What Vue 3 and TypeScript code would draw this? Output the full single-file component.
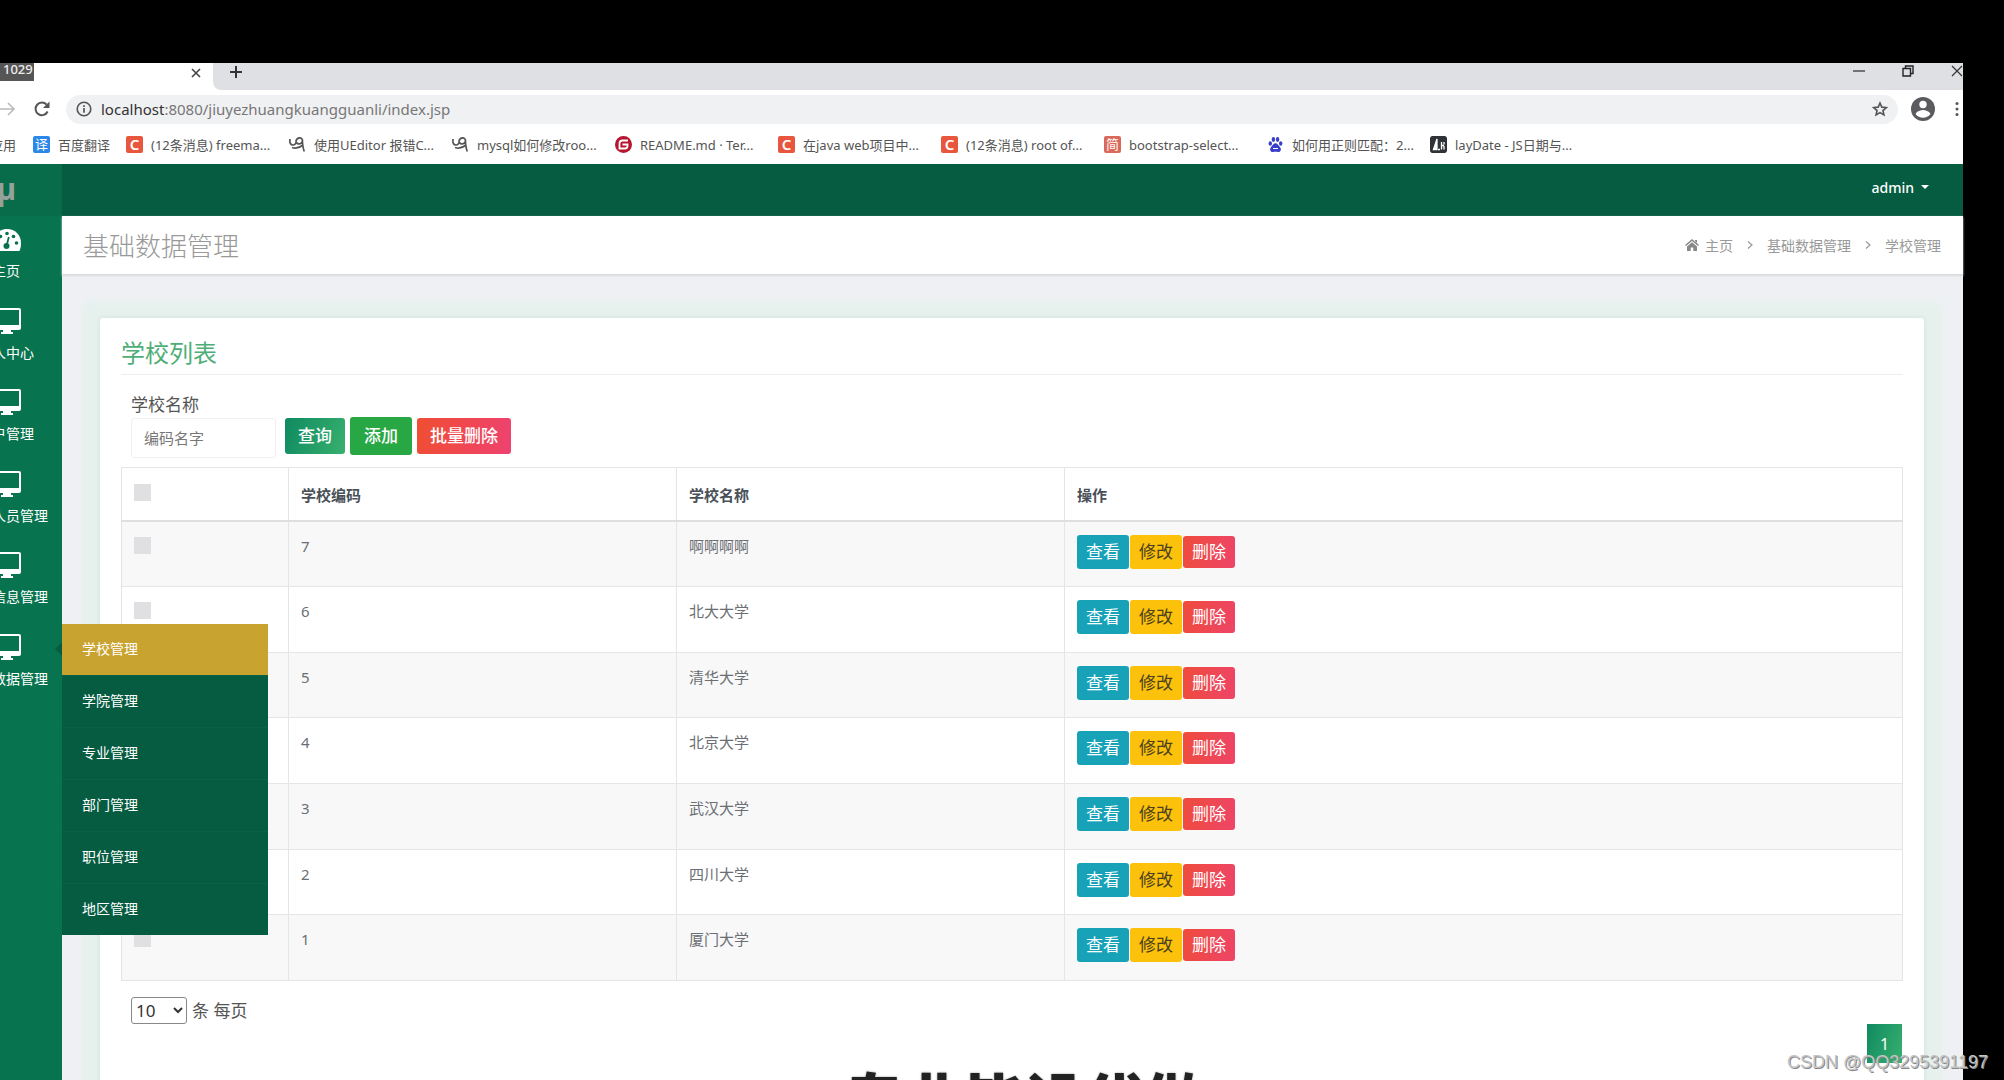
<script setup lang="ts">
import { ref } from 'vue'

interface Bookmark { icon: string; glyph?: string; title: string }
interface NavItem { label: string; size: string; icon: string; open?: boolean }
interface School { code: number; name: string }

const bookmarks: Bookmark[] = [
  { icon: 'blue', glyph: '译', title: '百度翻译' },
  { icon: 'csdn', glyph: 'C', title: '(12条消息) freema...' },
  { icon: 'swirl', title: '使用UEditor 报错C...' },
  { icon: 'swirl', title: 'mysql如何修改roo...' },
  { icon: 'gitee', title: 'README.md · Ter...' },
  { icon: 'csdn', glyph: 'C', title: '在java web项目中...' },
  { icon: 'csdn', glyph: 'C', title: '(12条消息) root of...' },
  { icon: 'jian', glyph: '简', title: 'bootstrap-select...' },
  { icon: 'paw', title: '如何用正则匹配：2...' },
  { icon: 'lay', title: 'layDate - JS日期与...' },
]

const nav: NavItem[] = [
  { label: '主页', size: 'short', icon: 'gauge' },
  { label: '人中心', size: 'medium', icon: 'screen' },
  { label: '户管理', size: 'medium', icon: 'screen' },
  { label: '人员管理', size: 'long', icon: 'screen' },
  { label: '信息管理', size: 'long', icon: 'screen' },
  { label: '数据管理', size: 'long', icon: 'screen', open: true },
]

const submenu: string[] = ['学校管理', '学院管理', '专业管理', '部门管理', '职位管理', '地区管理']

const schools: School[] = [
  { code: 7, name: '啊啊啊啊' },
  { code: 6, name: '北大大学' },
  { code: 5, name: '清华大学' },
  { code: 4, name: '北京大学' },
  { code: 3, name: '武汉大学' },
  { code: 2, name: '四川大学' },
  { code: 1, name: '厦门大学' },
]

const pageSize = ref('10')
const keyword = ref('')
</script>

<template>
  <div class="screen">
    <div class="window">
      <div class="tabs">
        <div class="tab">
          <span class="counter">1029</span>
          <button class="plain" aria-label="关闭标签页">
            <svg width="10" height="10" viewBox="0 0 10 10"><path d="M1 1l8 8M9 1l-8 8" stroke="#444" stroke-width="1.6" /></svg>
          </button>
        </div>
        <div class="strip">
          <button class="plain" aria-label="新标签页">
            <svg width="14" height="14" viewBox="0 0 14 14"><path d="M7 1v12M1 7h12" stroke="#333" stroke-width="2" /></svg>
          </button>
          <div class="controls">
            <button class="plain" aria-label="最小化"><svg width="12" height="12" viewBox="0 0 12 12"><path d="M0 6h12" stroke="#444" stroke-width="1.4" /></svg></button>
            <button class="plain" aria-label="还原"><svg width="12" height="12" viewBox="0 0 12 12"><path d="M1 3.500h7.500v7.500h-7.500zM3.500 3.500v-2.500h7.500v7.500h-2.500" fill="none" stroke="#222" stroke-width="1.400" /></svg></button>
            <button class="plain" aria-label="关闭"><svg width="12" height="12" viewBox="0 0 12 12"><path d="M1 1l10 10M11 1l-10 10" stroke="#333" stroke-width="1.200" /></svg></button>
          </div>
        </div>
      </div>

      <div class="toolbar">
        <button class="plain forward" aria-label="前进"><svg width="16" height="14" viewBox="0 0 16 14"><path d="M0 7h14M8 1l6 6-6 6" fill="none" stroke="#bbb" stroke-width="1.600" /></svg></button>
        <button class="plain reload" aria-label="刷新"><svg width="16" height="16" viewBox="0 0 16 16"><path d="M13.600 10.500A6.300 6.300 0 1 1 12.600 3.700" fill="none" stroke="#555" stroke-width="2" /><path d="M15.500 0.500v6.500h-6.500z" fill="#555" /></svg></button>
        <div class="address">
          <svg width="16" height="16" viewBox="0 0 16 16"><circle cx="8" cy="8" r="6.800" fill="none" stroke="#555" stroke-width="1.600" /><path d="M8 7v4.800M8 4.200v1.700" stroke="#555" stroke-width="1.700" /></svg>
          <span class="url">localhost<span class="path">:8080/jiuyezhuangkuangguanli/index.jsp</span></span>
          <svg class="star" width="16" height="16" viewBox="0 0 24 24"><path d="M12 3l2.700 6.200 6.800.6-5.100 4.500 1.500 6.600L12 17.400l-5.900 3.500 1.500-6.600-5.100-4.500 6.800-.6z" fill="none" stroke="#555" stroke-width="2.400" /></svg>
        </div>
        <svg class="profile" width="24" height="24" viewBox="0 0 24 24"><circle cx="12" cy="12" r="12" fill="#5b5b5f" /><circle cx="12" cy="7.500" r="3.700" fill="#fff" /><path d="M4.500 17c1.500-3 5-4 7.500-4s6 1 7.500 4c-2 2.500-4.500 3.800-7.500 3.800S6.500 19.500 4.500 17z" fill="#fff" /></svg>
        <svg width="4" height="16" viewBox="0 0 4 16"><circle cx="2" cy="2.500" r="1.500" fill="#555" /><circle cx="2" cy="8" r="1.500" fill="#555" /><circle cx="2" cy="13.500" r="1.500" fill="#555" /></svg>
      </div>

      <nav class="bookmarks">
        <a href="#" class="apps">应用</a>
        <a v-for="(b, i) in bookmarks" :key="i" href="#" class="bookmark">
          <span v-if="b.glyph" class="fav" :class="b.icon">{{ b.glyph }}</span>
          <svg v-else-if="b.icon === 'swirl'" class="fav" viewBox="0 0 17 17"><path d="M1 3c-.5 4 .5 6 3 6 2 0 3.500-2 3-4.500M7 5c1-4 6.500-4 6.500-.5S9 9 7.500 6.500M13.300 3c.2 4 .2 8 2 12.500M3 11.500c4 1.500 8 0 11-2.500" fill="none" stroke="#555" stroke-width="1.700" /></svg>
          <svg v-else-if="b.icon === 'gitee'" class="fav" viewBox="0 0 17 17"><circle cx="8.500" cy="8.500" r="8.500" fill="#b5172f" /><path d="M13 4.500H7.500c-2 0-3 1-3 3v5h5.500c1.600 0 2.500-1 2.500-2.500V8.500H7.500" fill="none" stroke="#fff" stroke-width="1.800" /></svg>
          <svg v-else-if="b.icon === 'paw'" class="fav" viewBox="0 0 17 17"><g fill="#3a3fc8"><ellipse cx="3.300" cy="7.500" rx="1.700" ry="2.300" /><ellipse cx="6.400" cy="3.500" rx="1.700" ry="2.400" /><ellipse cx="10.600" cy="3.500" rx="1.700" ry="2.400" /><ellipse cx="13.700" cy="7.500" rx="1.700" ry="2.300" /><path d="M8.500 7.200c2 0 2.700 2 4.200 3.500 2.300 2.500 1 5.500-1.700 5.300-1.700-.2-3.300-.2-5 0-2.700.2-4-2.800-1.700-5.300C5.800 9.200 6.500 7.200 8.500 7.200z" /></g><path d="M6 12.500h5" stroke="#fff" stroke-width="1.200" /></svg>
          <svg v-else class="fav" viewBox="0 0 17 17"><rect width="17" height="17" rx="2" fill="#2f3338" /><path d="M3.500 13.500L7 3v10.500zM8 13.500l2 0M11.500 6v7.500M14 6v2.500M14 10v3.500M11.500 9.500h2.500" fill="#fff" stroke="#fff" stroke-width="1.300" /></svg>
          <span>{{ b.title }}</span>
        </a>
      </nav>

      <div class="app">
        <aside class="sidebar">
          <div class="logo">µ</div>
          <ul class="nav">
            <li v-for="(n, i) in nav" :key="i">
              <a href="#" class="nav-link">
                <svg v-if="n.icon === 'gauge'" class="nav-icon" width="28" height="26" viewBox="0 0 28 26">
                  <path d="M14 3C6 3 0 9 0 17c0 3 .5 5.500 1.500 8h25c1-2.500 1.500-5 1.500-8 0-8-6-14-14-14z" fill="#fff" />
                  <g fill="#08724e"><circle cx="4.500" cy="17" r="1.800" /><circle cx="7.500" cy="10.500" r="1.800" /><circle cx="14" cy="7.500" r="1.800" /><circle cx="20.500" cy="10.500" r="1.800" /><circle cx="23.500" cy="17" r="1.800" /><circle cx="13.500" cy="20" r="3" /></g>
                  <path d="M13.800 19l2-8" stroke="#08724e" stroke-width="1.800" />
                </svg>
                <svg v-else class="nav-icon" width="28" height="26" viewBox="0 0 28 26">
                  <path d="M2 0h24a2 2 0 0 1 2 2v18a2 2 0 0 1-2 2h-8v2l2 0v2H8v-2h2v-2H2a2 2 0 0 1-2-2V2a2 2 0 0 1 2-2zM2 2v15h24V2z" fill="#fff" fill-rule="evenodd" />
                </svg>
                <span class="nav-label" :class="n.size">{{ n.label }}</span>
              </a>
              <div v-if="n.open" class="submenu">
                <a v-for="(s, k) in submenu" :key="s" href="#" :class="{ current: k === 0 }">{{ s }}</a>
              </div>
            </li>
          </ul>
        </aside>

        <main class="main">
          <header class="topbar"><button class="plain user">admin <span class="caret"></span></button></header>
          <div class="heading">
            <h1>基础数据管理</h1>
            <nav class="crumbs">
              <svg width="14" height="12" viewBox="0 0 14 12"><path d="M7 0l7 6-1 1-6-5-6 5-1-1zM2 7.500L7 3.300l5 4.200V12H8.300V8.500H5.700V12H2zM10 1h2v3l-2-2z" fill="#888" /></svg>
              <a href="#" class="home">主页</a>
              <svg class="sep" width="6" height="8" viewBox="0 0 6 8"><path d="M1 0.500l4 3.500-4 3.500" fill="none" stroke="#999" stroke-width="1.200" /></svg>
              <a href="#">基础数据管理</a>
              <svg class="sep" width="6" height="8" viewBox="0 0 6 8"><path d="M1 0.500l4 3.500-4 3.500" fill="none" stroke="#999" stroke-width="1.200" /></svg>
              <span>学校管理</span>
            </nav>
          </div>

          <section class="card">
            <h2>学校列表</h2>
            <form class="search" @submit.prevent>
              <label for="keyword">学校名称</label>
              <div class="search-row">
                <input id="keyword" v-model="keyword" type="text" placeholder="编码名字" />
                <button class="btn green">查询</button>
                <button class="btn add">添加</button>
                <button class="btn red">批量删除</button>
              </div>
            </form>

            <table>
              <colgroup><col class="c1" /><col class="c2" /><col class="c2" /><col /></colgroup>
              <thead>
                <tr>
                  <th><input type="checkbox" aria-label="全选" /></th>
                  <th>学校编码</th>
                  <th>学校名称</th>
                  <th>操作</th>
                </tr>
              </thead>
              <tbody>
                <tr v-for="s in schools" :key="s.code">
                  <td><input type="checkbox" :aria-label="s.name" /></td>
                  <td>{{ s.code }}</td>
                  <td>{{ s.name }}</td>
                  <td>
                    <div class="actions">
                      <button class="act view">查看</button>
                      <button class="act edit">修改</button>
                      <button class="act remove">删除</button>
                    </div>
                  </td>
                </tr>
              </tbody>
            </table>

            <div class="page-size">
              <select id="size" v-model="pageSize"><option>10</option></select>
              <label for="size">条 每页</label>
            </div>
            <div class="pager"><button class="page">1</button></div>
          </section>
        </main>
      </div>
    </div>
    <div class="caption">专业毕设代做</div>
    <div class="watermark">CSDN @QQ3295391197</div>
  </div>
</template>

<style>
body { background: #000; }
</style>

<style scoped>
* { box-sizing: border-box; }
a { color: inherit; text-decoration: none; }
svg { display: block; flex: none; }
button, input, select { font-family: inherit; }
.plain { border: 0; padding: 0; background: none; color: inherit; }

.screen {
  position: relative;
  display: flex;
  height: 100vh;
  padding: 63px 41px 0 0;
  overflow: hidden;
  background: #000;
  font-family: "Noto Sans", "Noto Sans CJK SC", sans-serif;
}
.window { flex: 1; min-width: 0; display: flex; flex-direction: column; background: #fff; }

.tabs { display: flex; height: 27px; }
.tab { width: 213px; display: flex; align-items: flex-start; justify-content: space-between; padding-right: 12px; }
.tab .plain { margin-top: 5px; }
.counter { width: 34px; height: 18px; padding-left: 3px; background: #555; color: #eee; font-size: 13px; line-height: 13px; font-weight: 500; }
.strip { flex: 1; display: flex; align-items: flex-start; justify-content: space-between; padding: 2px 0 0 16px; background: #dfe0e4; border-bottom-left-radius: 8px; }
.controls { display: flex; gap: 37px; }

.toolbar { display: flex; align-items: center; height: 38px; padding-right: 4px; }
.forward { width: 34px; }
.reload { width: 32px; }
.address { flex: 1; display: flex; align-items: center; height: 29px; padding: 0 10px; border-radius: 15px; background: #f0f1f3; }
.url { flex: 1; margin-left: 9px; font-size: 15px; color: #333; }
.path { color: #777; }
.profile { margin: 0 20px 0 13px; }

.bookmarks { display: flex; height: 36px; align-items: center; font-size: 13px; color: #555; white-space: nowrap; line-height: 16px; padding-bottom: 3px; }
.apps { width: 33px; display: flex; justify-content: flex-end; padding-right: 17px; overflow: hidden; flex: none; }
.bookmark { flex: none; width: 163px; display: flex; align-items: center; gap: 8px; }
.bookmark:nth-child(2) { width: 93px; }
.fav { flex: none; width: 17px; height: 17px; border-radius: 2px; color: #fff; text-align: center; font-size: 13px; line-height: 17px; }
.blue { background: #2b87e8; }
.csdn { background: #e8573d; font-weight: 600; font-size: 15px; }
.jian { background: #d96a5b; }

.app { flex: 1; display: flex; min-height: 0; }
.sidebar { width: 62px; flex: none; background: #08744f; color: #fff; }
.logo { height: 52px; display: flex; justify-content: flex-end; padding-right: 46px; background: #086c4a; color: #95a29b; font-size: 30px; font-weight: 700; line-height: 50px; }
.nav { list-style: none; margin: 0; padding: 0; }
.nav li { position: relative; height: 82px; }
.nav li:nth-child(even) { height: 81px; }
.nav-link { display: flex; flex-direction: column; align-items: flex-end; gap: 9px; height: 100%; padding-top: 10px; overflow: hidden; }
.nav-icon { margin-right: 41px; }
.nav-label { font-size: 14px; line-height: 20px; white-space: nowrap; }
.short { padding-right: 42px; }
.medium { padding-right: 28px; }
.long { padding-right: 14px; }

.submenu { position: absolute; left: 62px; top: 0; z-index: 2; width: 206px; background: #055c41; }
.submenu::before { content: ""; position: absolute; right: 100%; top: 18px; border: 7px solid transparent; border-right-color: #055c41; border-left: 0; }
.submenu a { display: block; padding: 0 0 2px 20px; font-size: 14px; line-height: 49px; border-bottom: 1px solid #086247; }
.submenu a:last-child { border-bottom: 0; }
.submenu .current { background: #c9a32f; }

.main { flex: 1; min-width: 0; background: #eff0f3; }
.topbar { display: flex; justify-content: flex-end; height: 52px; padding: 0 34px 6px 0; background: #055c41; color: #fff; }
.user { display: flex; align-items: center; gap: 7px; font-size: 14px; font-weight: 500; }
.caret { border: 4px solid transparent; border-top-color: #fff; border-bottom: 0; }
.heading { display: flex; align-items: center; justify-content: space-between; height: 59px; padding: 0 22px 1px 21px; background: #fff; border-bottom: 1px solid #d9dbdf; box-shadow: 0 1px 2px #dcdee2; color: #999; }
h1 { margin: 0; font-size: 26px; font-weight: 300; }
.crumbs { display: flex; align-items: center; font-size: 14px; }
.home { margin-left: 6px; }
.sep { margin: 0 14px; }

.card { margin: 43px 39px 0 38px; padding: 19px 21px 120px 21px; background: #fff; border-radius: 3px; box-shadow: 0 0 4px #cfe0da, 0 0 6px 18px #e6f1ee; color: #555; }
h2 { margin: 0; padding-bottom: 5px; border-bottom: 1px solid #eceded; color: #4fae78; font-size: 24px; line-height: 32px; font-weight: 400; }
.search { padding: 18px 10px 9px; }
.search label { display: block; font-size: 17px; line-height: 24px; }
.search-row { display: flex; align-items: center; height: 41px; }
.search-row input { width: 145px; height: 40px; margin-right: 9px; padding: 0 12px; border: 1px solid #f0f0f1; border-radius: 3px; background: #fff; font-size: 15px; outline: 0; }
.search-row input::placeholder { color: #777; }
.btn { height: 36px; margin: 0 5px 3px 0; padding: 0 13px; border: 0; border-radius: 3px; color: #fff; font-size: 17px; line-height: 24px; font-weight: 500; }
.green { background: linear-gradient(110deg, #0f8a60, #38b06f); }
.add { height: 38px; padding: 0 14px; background: #28a745; }
.red { background: linear-gradient(100deg, #f04e32, #ee4270); }

table { width: 100%; table-layout: fixed; border-collapse: collapse; font-size: 15px; }
.c1 { width: 167px; }
.c2 { width: 388px; }
th, td { border: 1px solid #e4e5e7; padding: 13px; text-align: left; vertical-align: top; line-height: 22px; }
th { height: 53px; padding: 16px 13px 0 12px; border-bottom: 2px solid #dcdee0; color: #495057; font-weight: 700; }
tbody tr { height: 66px; }
tbody tr:nth-child(3n) { height: 65px; }
tbody tr:nth-child(odd) { background: #f8f8f9; }
td:nth-child(2), td:nth-child(3) { color: #6b6f73; }
td { padding: 13px 13px 0 12px; }
td input, th input { display: block; appearance: none; width: 17px; height: 17px; margin: 2px 0 0; background: #e0e0e3; }
th input { margin: 0; }
.actions { display: flex; align-items: center; gap: 1px; }
.act { height: 34px; padding: 0 9px; border: 0; border-radius: 3px; font-size: 17px; line-height: 24px; color: #fff; }
.view { background: #18a2b8; }
.edit { background: #fbc10b; color: #4a4020; }
.remove { height: 32px; background: linear-gradient(100deg, #ef4c3b, #ee4468); }

.page-size { display: flex; align-items: center; gap: 5px; padding: 16px 10px 0; font-size: 17px; }
.page-size label { line-height: 26px; }
select { width: 56px; height: 27px; border: 1px solid #888; border-radius: 3px; background: #fff; color: #333; font-size: 17px; }
.pager { display: flex; justify-content: flex-end; padding-right: 1px; }
.page { width: 35px; height: 39px; border: 0; background: linear-gradient(110deg, #0f8a60, #38b06f); color: #fff; font-size: 16px; }

.caption { position: absolute; left: 844px; top: 1071px; z-index: 3; font-size: 60px; line-height: 60px; font-weight: 900; color: #222; white-space: nowrap; text-shadow: 0 0 2px #888; }
.watermark { position: absolute; right: 16px; bottom: 6px; z-index: 3; font-family: "Liberation Sans", sans-serif; font-size: 18px; line-height: 24px; color: #c4c4c4; text-shadow: 1px 1px 0 #888; white-space: nowrap; }
</style>
